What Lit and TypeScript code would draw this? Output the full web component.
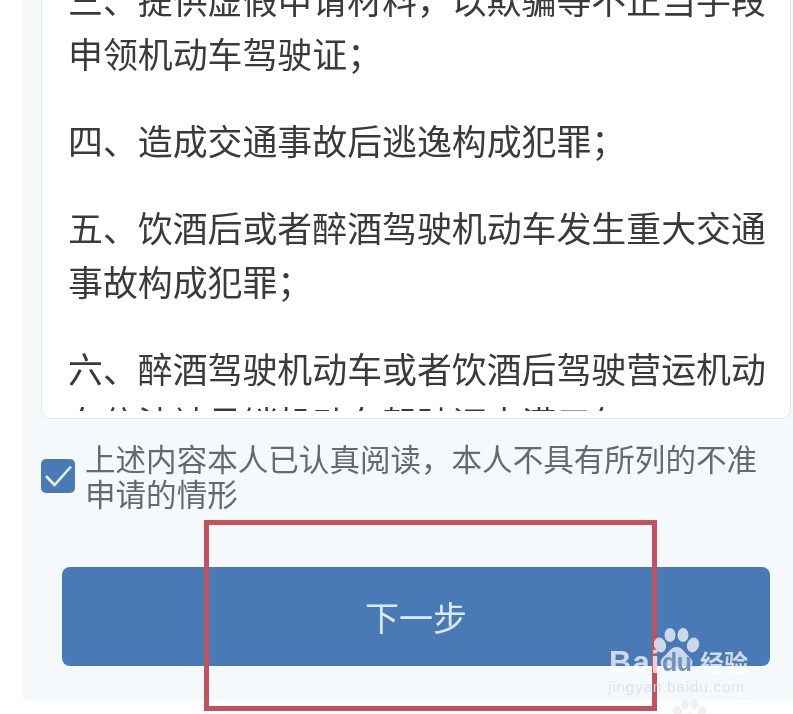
import { LitElement, html, css, svg } from "lit";
import { customElement } from "lit/decorators.js";

@customElement("app-root")
export class AppRoot extends LitElement {
  static styles = css`
    :host {
      display: block;
      position: relative;
      width: 793px;
      height: 714px;
      overflow: hidden;
      background: #fff;
      font-family: "Noto Sans CJK SC", "Noto Sans", sans-serif;
    }
    .phone {
      box-sizing: border-box;
      margin-left: 23px;
      height: 700px;
      background: #f5f9fb;
      padding: 0 2px 0 18px;
      display: flex;
      flex-direction: column;
      filter: blur(0.5px);
    }
    .card {
      box-sizing: border-box;
      height: 419px;
      flex: none;
      background: #fff;
      border: 1px solid #e3e5e7;
      border-top: 0;
      border-radius: 0 0 9px 9px;
      padding-right: 1px;
    }
    .scroll {
      height: 411px;
      overflow: hidden;
    }
    .text {
      margin-top: -28px;
      padding-left: 26px;
      width: 700px;
      font-size: 34.9px;
      line-height: 54px;
      color: #3a3a3a;
    }
    .text p {
      margin: 0 0 33px;
    }
    .agree {
      display: flex;
      align-items: center;
      gap: 10px;
      margin-top: 22px;
      height: 70px;
    }
    .check {
      flex: none;
      width: 34px;
      height: 34px;
      border-radius: 5px;
      background: #4a7ab4;
      display: flex;
      align-items: center;
      justify-content: center;
    }
    .agree span {
      width: 690px;
      font-size: 30.55px;
      line-height: 35px;
      color: #666a6e;
    }
    .btn {
      box-sizing: border-box;
      margin: 56px 21px 0 21px;
      height: 99px;
      flex: none;
      border-radius: 8px;
      background: #4a7ab5;
      color: #d9e9f5;
      font-size: 34px;
      display: flex;
      align-items: center;
      justify-content: center;
    }
    .mark {
      position: absolute;
      left: 204px;
      top: 520px;
      width: 453px;
      height: 191px;
      box-sizing: border-box;
      border: 5px solid #c2535c;
    }
    .wm {
      position: absolute;
      left: 608px;
      top: 628px;
      width: 140px;
      height: 70px;
      color: rgba(255, 255, 255, 0.72);
      font-family: "Liberation Sans", sans-serif;
      filter: blur(0.4px);
    }
    .wm svg {
      position: absolute;
      left: 46px;
      top: 0;
    }
    .wm .bai {
      position: absolute;
      left: 1px;
      top: 20px;
      font-size: 31px;
      line-height: 30px;
      font-weight: 700;
      letter-spacing: 1px;
    }
    .wm .du {
      position: absolute;
      left: 54px;
      top: 21px;
      font-size: 25px;
      line-height: 26px;
      font-weight: 700;
      letter-spacing: -0.5px;
      color: #6f93c0;
    }
    .wm .jy {
      position: absolute;
      left: 92px;
      top: 20px;
      font-family: "Noto Sans CJK SC", sans-serif;
      font-size: 24px;
      line-height: 28px;
      font-weight: 700;
    }
    .wm .url {
      position: absolute;
      left: 0;
      top: 50px;
      font-size: 15.5px;
      line-height: 18px;
      letter-spacing: 0.7px;
      color: rgba(215, 225, 235, 0.85);
      white-space: nowrap;
    }
    .paw2 {
      position: absolute;
      left: 673px;
      top: 699px;
    }
  `;

  private paw(w: number, h: number, fill: string) {
    return html`<svg width=${w} height=${h} viewBox="0 0 46 46" fill=${fill}>
      ${svg`<ellipse cx="6" cy="17" rx="6" ry="7.5" transform="rotate(-18 6 17)"/>
        <ellipse cx="16" cy="7" rx="5.5" ry="7"/>
        <ellipse cx="29" cy="7" rx="5.5" ry="7"/>
        <ellipse cx="39" cy="17" rx="6" ry="7.5" transform="rotate(18 39 17)"/>
        <path d="M22.5 19c-6 0-8 6-12 9-4 3-5 7-3 10 2.500 4 8 3 15 3s12.500 1 15-3c2-3 1-7-3-10-4-3-6-9-12-9z"/>`}
    </svg>`;
  }

  render() {
    return html`
      <div class="phone">
        <div class="card">
          <div class="scroll">
            <div class="text">
              <p>三、提供虚假申请材料，以欺骗等不正当手段申领机动车驾驶证；</p>
              <p>四、造成交通事故后逃逸构成犯罪；</p>
              <p>五、饮酒后或者醉酒驾驶机动车发生重大交通事故构成犯罪；</p>
              <p>六、醉酒驾驶机动车或者饮酒后驾驶营运机动车依法被吊销机动车驾驶证未满五年；</p>
            </div>
          </div>
        </div>
        <div class="agree">
          <div class="check">
            <svg width="30" height="26" viewBox="0 0 30 26" fill="none">
              <path d="M3 13 L11.500 22 L28 3.500" stroke="#e3eef7" stroke-width="2.600" />
            </svg>
          </div>
          <span>上述内容本人已认真阅读，本人不具有所列的不准申请的情形</span>
        </div>
        <div class="btn">下一步</div>
      </div>
      <div class="mark"></div>
      <div class="wm">
        ${this.paw(46, 46, "rgba(226,233,243,0.85)")}
        <span class="bai">Bai</span>
        <span class="du">du</span>
        <span class="jy">经验</span>
        <span class="url">jingyan.baidu.com</span>
      </div>
      <div class="paw2">${this.paw(34, 34, "#eef1f3")}</div>
    `;
  }
}
